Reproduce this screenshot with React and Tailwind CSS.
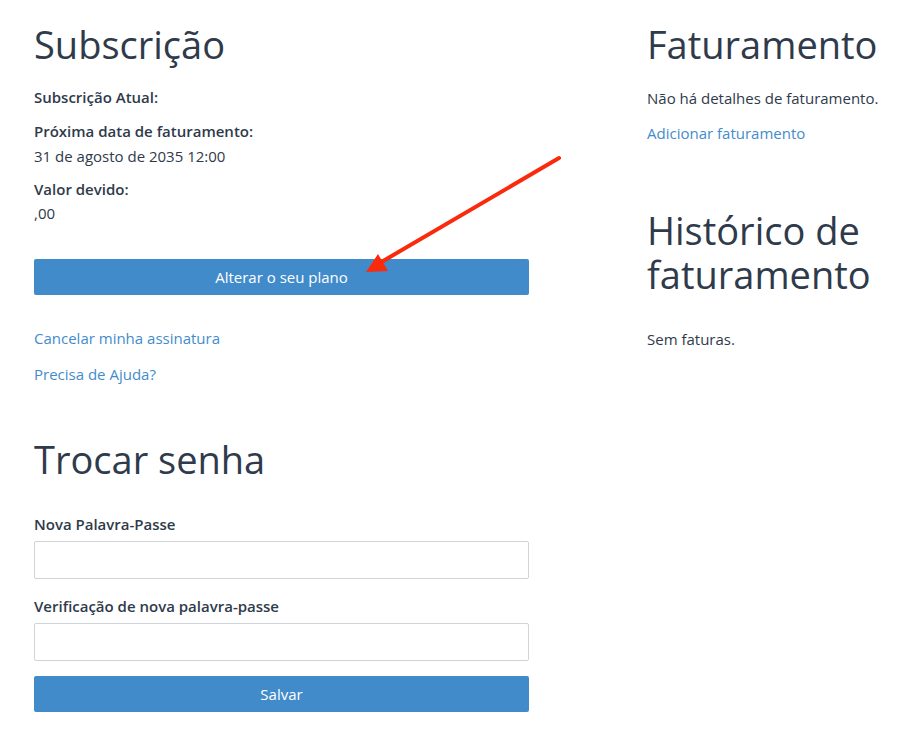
export default function App() {
  return (
    <div
      className="relative min-h-[743px] bg-white text-[#2f3a4b]"
      style={{ fontFamily: '"Open Sans", "Liberation Sans", sans-serif' }}
    >
      <div className="flex pl-[34px] pt-[22px]">
        {/* Left column */}
        <div className="w-[495px] shrink-0">
          <h1 className="text-[38px] leading-[44px] font-normal">Subscrição</h1>

          <p className="mt-[19px] text-[15px] leading-6 font-semibold">Subscrição Atual:</p>

          <p className="mt-[10px] text-[15px] leading-6 font-semibold">Próxima data de faturamento:</p>
          <p className="mt-[1px] text-[15px] leading-6">31 de agosto de 2035 12:00</p>

          <p className="mt-[9px] text-[15px] leading-6 font-semibold">Valor devido:</p>
          <p className="text-[15px] leading-6">,00</p>

          <button className="mt-[34px] block h-9 w-full rounded-[2px] bg-[#428bca] text-[15px] text-white">
            Alterar o seu plano
          </button>

          <a className="mt-[31px] block text-[15px] leading-6 text-[#438ccb]" href="#">
            Cancelar minha assinatura
          </a>
          <a className="mt-[12px] block text-[15px] leading-6 text-[#438ccb]" href="#">
            Precisa de Ajuda?
          </a>

          <h1 className="mt-[51px] text-[38px] leading-[44px] font-normal">Trocar senha</h1>

          <label className="mt-[31px] block text-[15px] leading-6 font-semibold">Nova Palavra-Passe</label>
          <input
            type="password"
            className="mt-[5px] block h-[38px] w-full rounded-[2px] border border-[#cfd3da] bg-white px-3"
          />

          <label className="mt-[15px] block text-[15px] leading-6 font-semibold">
            Verificação de nova palavra-passe
          </label>
          <input
            type="password"
            className="mt-[5px] block h-[38px] w-full rounded-[2px] border border-[#cfd3da] bg-white px-3"
          />

          <button className="mt-[15px] block h-9 w-full rounded-[2px] bg-[#428bca] text-[15px] text-white">
            Salvar
          </button>
        </div>

        {/* Right column */}
        <div className="ml-[118px] w-[245px]">
          <h1 className="text-[38px] leading-[44px] font-normal">Faturamento</h1>
          <p className="mt-[20px] text-[15px] leading-6">Não há detalhes de faturamento.</p>
          <a className="mt-[11px] block text-[15px] leading-6 text-[#438ccb]" href="#">
            Adicionar faturamento
          </a>

          <h1 className="mt-[63px] text-[38px] leading-[44px] font-normal">Histórico de faturamento</h1>
          <p className="mt-[31px] text-[15px] leading-6">Sem faturas.</p>
        </div>
      </div>

      {/* annotation arrow */}
      <svg className="pointer-events-none absolute left-0 top-0" width="910" height="743">
        <line x1="559" y1="158" x2="378" y2="264" stroke="#fa2a0c" strokeWidth="4" strokeLinecap="round" />
        <polygon points="366,272 378,254 388,271" fill="#fa2a0c" />
      </svg>
    </div>
  );
}
